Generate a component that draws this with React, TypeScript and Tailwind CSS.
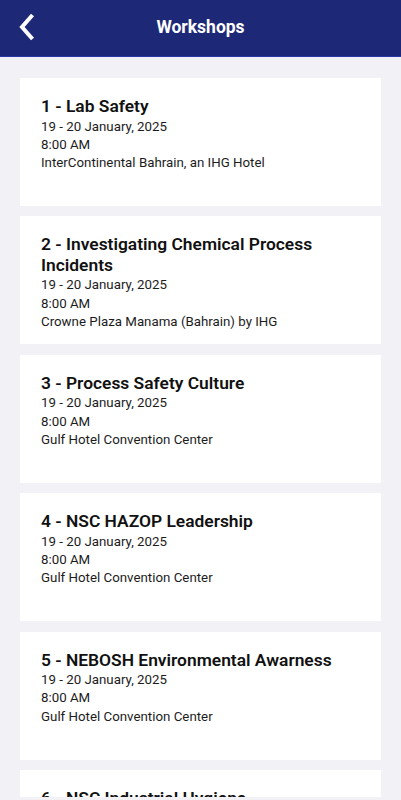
import React from "react";

const items = [
  { t: "1 - Lab Safety", loc: "InterContinental Bahrain, an IHG Hotel" },
  { t: "2 - Investigating Chemical Process Incidents", loc: "Crowne Plaza Manama (Bahrain) by IHG" },
  { t: "3 - Process Safety Culture", loc: "Gulf Hotel Convention Center" },
  { t: "4 - NSC HAZOP Leadership", loc: "Gulf Hotel Convention Center" },
  { t: "5 - NEBOSH Environmental Awarness", loc: "Gulf Hotel Convention Center" },
  { t: "6 - NSC Industrial Hygiene", loc: "Gulf Hotel Convention Center" },
];

export default function App() {
  return (
    <div
      className="w-[401px] h-[800px] overflow-hidden bg-[#f1f1f6] flex flex-col"
      style={{ fontFamily: "Roboto, 'Noto Sans', sans-serif" }}
    >
      <div className="h-[57px] shrink-0 bg-[#1d2977] border-b border-[#2b3aa8] relative flex items-center justify-center">
        <svg
          className="absolute left-[17px] top-[12px]"
          width="20"
          height="30"
          viewBox="0 0 20 30"
        >
          <polyline
            points="15.5,3 5,15 15.5,27"
            fill="none"
            stroke="white"
            strokeWidth="4"
            strokeLinecap="butt"
            strokeLinejoin="miter"
          />
        </svg>
        <span className="text-white font-bold text-[17.5px] leading-none">Workshops</span>
      </div>
      <div className="h-[740px] shrink-0 overflow-hidden px-5 pt-[21px] flex flex-col gap-[10.4px]">
        {items.map((it) => (
          <div key={it.t} className="bg-white h-[128px] shrink-0 pl-[21px] pr-4 pt-[18px]">
            <div className="text-[17.4px] leading-[20.5px] font-semibold text-[#111]">{it.t}</div>
            <div className="text-[13.3px] leading-[18.3px] text-[#1c1c1c] mt-[1px]">
              <div>19 - 20 January, 2025</div>
              <div>8:00 AM</div>
              <div>{it.loc}</div>
            </div>
          </div>
        ))}
      </div>
    </div>
  );
}
